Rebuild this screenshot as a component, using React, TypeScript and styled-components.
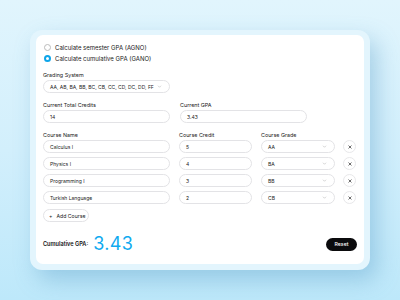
import React from "react";
import styled, { createGlobalStyle } from "styled-components";

const Global = createGlobalStyle`
  html, body { margin: 0; padding: 0; }
  body {
    width: 400px; height: 300px; overflow: hidden;
    font-family: Inter, "Noto Sans", sans-serif;
    background: linear-gradient(180deg, #e1f5fd 0%, #d2effc 50%, #bde8fa 100%);
  }
  * { box-sizing: border-box; }
`;

const Page = styled.div`
  width: 400px; height: 300px;
  padding: 30px 30px 0 30px;
`;

const Frame = styled.div`
  width: 340px; height: 240px;
  background: #e3f5fd;
  border-radius: 12px;
  padding: 5px 6px 6px 6px;
  box-shadow: 7px 10px 22px rgba(80, 150, 195, 0.38);
`;

const Card = styled.div`
  height: 100%;
  background: #fff;
  border-radius: 7px;
  padding: 7px 7px 0 7px;
  display: flex; flex-direction: column;
  white-space: nowrap;
`;

const RadioRow = styled.div`
  display: flex; align-items: center; gap: 4px;
  height: 11px; margin-left: 1px;
  font-size: 6px; color: #222;
`;

const Radio = styled.span<{ $on?: boolean }>`
  width: 7px; height: 7px; border-radius: 50%;
  border: ${p => (p.$on ? "2px solid #0ea5e9" : "0.7px solid #bbb")};
  background: #fff;
`;

const Spacer = styled.div<{ $h: number }>`
  height: ${p => p.$h}px; flex: none;
`;

const Label = styled.div`
  font-size: 5.4px; color: #222; height: 8px; line-height: 8px;
`;

const Field = styled.div<{ $w: number }>`
  width: ${p => p.$w}px; height: 13px;
  border: 0.8px solid #e3e3e6;
  border-radius: 7px;
  display: flex; align-items: center; justify-content: space-between;
  padding: 0 7px 0 6px;
  font-size: 5px; color: #222; background: #fff;
`;

const Chevron = styled.svg`
  width: 5px; height: 5px; flex: none;
`;

const Group = styled.div`
  display: flex; flex-direction: column; gap: 1px;
`;

const Row = styled.div`
  display: flex; align-items: flex-end; gap: 10px;
`;

const CourseGrid = styled.div`
  display: grid;
  grid-template-columns: 127px 73px 74px 13px;
  column-gap: 9px;
  row-gap: 4px;
  align-items: center;
  & > :nth-child(-n + 4) { margin-bottom: -3px; }
`;

const XBtn = styled.div`
  width: 13px; height: 13px; border-radius: 50%;
  border: 0.8px solid #e8e8ea;
  display: flex; align-items: center; justify-content: center;
  margin-left: -1px;
`;

const XIcon = styled.svg`
  width: 4px; height: 4px;
`;

const AddBtn = styled.div`
  width: 46px; height: 13px; border-radius: 7px;
  border: 0.8px solid #e3e3e6;
  display: flex; align-items: center; gap: 4px;
  padding-left: 5px;
  font-size: 5.2px; color: #222;
`;

const Footer = styled.div`
  margin-top: auto; margin-bottom: 11px;
  display: flex; align-items: center; justify-content: space-between;
`;

const Total = styled.div`
  display: flex; align-items: center; gap: 5px;
`;

const TotalLabel = styled.span`
  font-size: 5.6px; font-weight: 600; color: #111;
`;

const Big = styled.span`
  font-size: 18px; line-height: 18px; color: #0faaf0; letter-spacing: 0.3px;
`;

const Reset = styled.div`
  width: 31px; height: 13px; border-radius: 7px;
  background: #0b0b0d; color: #fff;
  font-size: 5.2px; font-weight: 500;
  display: flex; align-items: center; justify-content: center;
`;

const Chev = () => (
  <Chevron viewBox="0 0 10 10">
    <path d="M2.5 4 L5 6.5 L7.5 4" fill="none" stroke="#aaa" strokeWidth="1" strokeLinecap="round" />
  </Chevron>
);

const courses = [
  ["Calculus I", "5", "AA"],
  ["Physics I", "4", "BA"],
  ["Programming I", "3", "BB"],
  ["Turkish Language", "2", "CB"],
];

export default function App() {
  return (
    <>
      <Global />
      <Page>
        <Frame>
          <Card>
            <RadioRow><Radio />Calculate semester GPA (AGNO)</RadioRow>
            <RadioRow><Radio $on />Calculate cumulative GPA (GANO)</RadioRow>
            <Spacer $h={7} />
            <Group>
              <Label>Grading System</Label>
              <Field $w={127}>AA, AB, BA, BB, BC, CB, CC, CD, DC, DD, FF<Chev /></Field>
            </Group>
            <Spacer $h={8} />
            <Row>
              <Group>
                <Label>Current Total Credits</Label>
                <Field $w={127}>14</Field>
              </Group>
              <Group>
                <Label>Current GPA</Label>
                <Field $w={127}>3.43</Field>
              </Group>
            </Row>
            <Spacer $h={8} />
            <CourseGrid>
              <Label>Course Name</Label>
              <Label>Course Credit</Label>
              <Label>Course Grade</Label>
              <span />
              {courses.map(([n, c, g]) => (
                <React.Fragment key={n}>
                  <Field $w={127}>{n}</Field>
                  <Field $w={73}>{c}</Field>
                  <Field $w={74}>{g}<Chev /></Field>
                  <XBtn>
                    <XIcon viewBox="0 0 10 10">
                      <path d="M2 2 L8 8 M8 2 L2 8" stroke="#333" strokeWidth="1.8" strokeLinecap="round" />
                    </XIcon>
                  </XBtn>
                </React.Fragment>
              ))}
            </CourseGrid>
            <Spacer $h={5} />
            <AddBtn><span>+</span>Add Course</AddBtn>
            <Footer>
              <Total>
                <TotalLabel>Cumulative GPA:</TotalLabel>
                <Big>3.43</Big>
              </Total>
              <Reset>Reset</Reset>
            </Footer>
          </Card>
        </Frame>
      </Page>
    </>
  );
}
